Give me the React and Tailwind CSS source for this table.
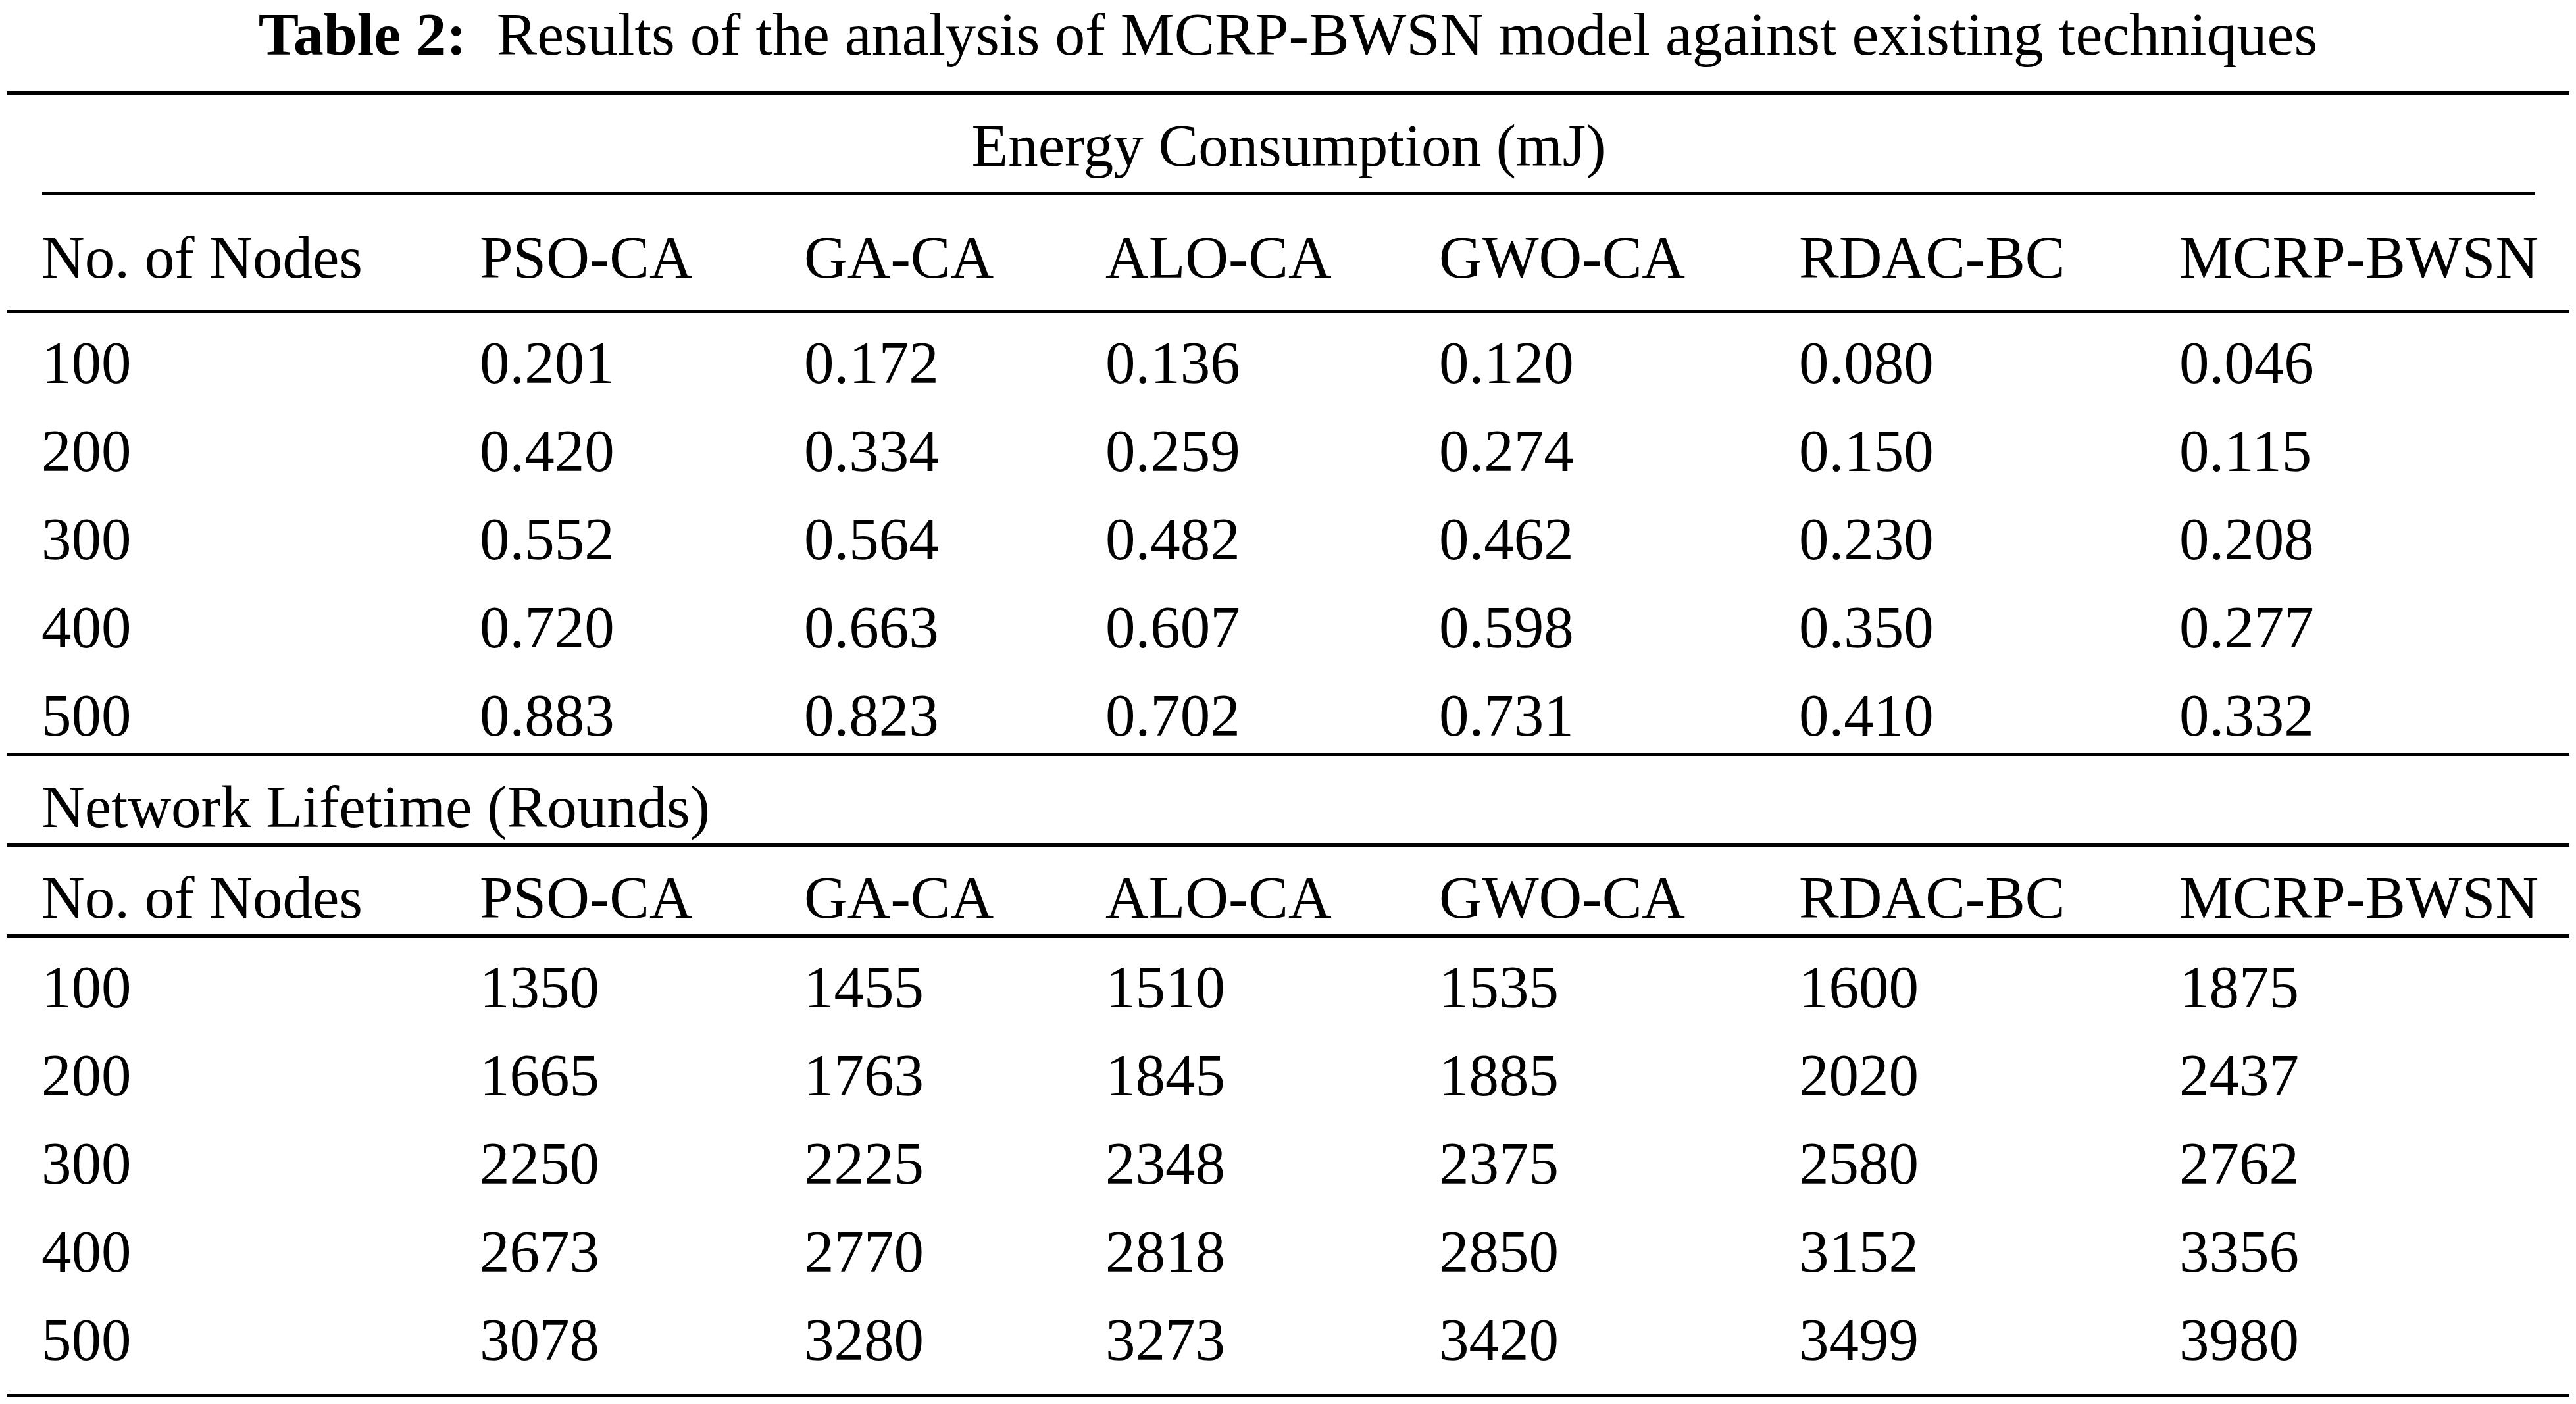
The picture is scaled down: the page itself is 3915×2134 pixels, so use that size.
import React from "react";

const heads = ["No. of Nodes", "PSO-CA", "GA-CA", "ALO-CA", "GWO-CA", "RDAC-BC", "MCRP-BWSN"];

const energy = [
  ["100", "0.201", "0.172", "0.136", "0.120", "0.080", "0.046"],
  ["200", "0.420", "0.334", "0.259", "0.274", "0.150", "0.115"],
  ["300", "0.552", "0.564", "0.482", "0.462", "0.230", "0.208"],
  ["400", "0.720", "0.663", "0.607", "0.598", "0.350", "0.277"],
  ["500", "0.883", "0.823", "0.702", "0.731", "0.410", "0.332"],
];

const lifetime = [
  ["100", "1350", "1455", "1510", "1535", "1600", "1875"],
  ["200", "1665", "1763", "1845", "1885", "2020", "2437"],
  ["300", "2250", "2225", "2348", "2375", "2580", "2762"],
  ["400", "2673", "2770", "2818", "2850", "3152", "3356"],
  ["500", "3078", "3280", "3273", "3420", "3499", "3980"],
];

function Rule() {
  return <div className="h-[5px] w-full bg-black" />;
}

function Row({ cells, className }) {
  return (
    <div
      className={
        "grid grid-cols-[666px_493px_458px_507px_547px_578px_1fr] pl-[53px] whitespace-nowrap " +
        className
      }
    >
      {cells.map((c, i) => (
        <div key={i}>{c}</div>
      ))}
    </div>
  );
}

export default function App() {
  return (
    <div className="w-[3915px] h-[2134px] bg-white text-black [font-family:'Liberation_Serif','Times_New_Roman',serif] text-[91px]">
      <div className="ml-[10px] w-[3895px]">
        <div className="h-[139px] pt-[7px] leading-[91px] text-center whitespace-nowrap text-[92px]">
          <span className="font-bold">Table 2:</span>
          <span className="ml-[46px]">Results of the analysis of MCRP-BWSN model against existing techniques</span>
        </div>
        <Rule />
        <div className="h-[148px] pt-[32px] leading-[91px]">
          <div className="ml-[54px] w-[3789px] text-center whitespace-nowrap">Energy Consumption (mJ)</div>
        </div>
        <div className="ml-[54px] w-[3789px] h-[5px] bg-black" />
        <Row cells={heads} className="h-[174px] pt-[49px] leading-[91px]" />
        <Rule />
        <div className="h-[668px] pt-[9px]">
          {energy.map((r, i) => (
            <Row key={i} cells={r} className="leading-[134px]" />
          ))}
        </div>
        <Rule />
        <div className="h-[133px] pt-[32px] leading-[91px] pl-[53px] whitespace-nowrap">Network Lifetime (Rounds)</div>
        <Rule />
        <Row cells={heads} className="h-[133px] pt-[32px] leading-[91px]" />
        <Rule />
        <div className="h-[694px] pt-[9px]">
          {lifetime.map((r, i) => (
            <Row key={i} cells={r} className="leading-[134px]" />
          ))}
        </div>
        <Rule />
      </div>
    </div>
  );
}
